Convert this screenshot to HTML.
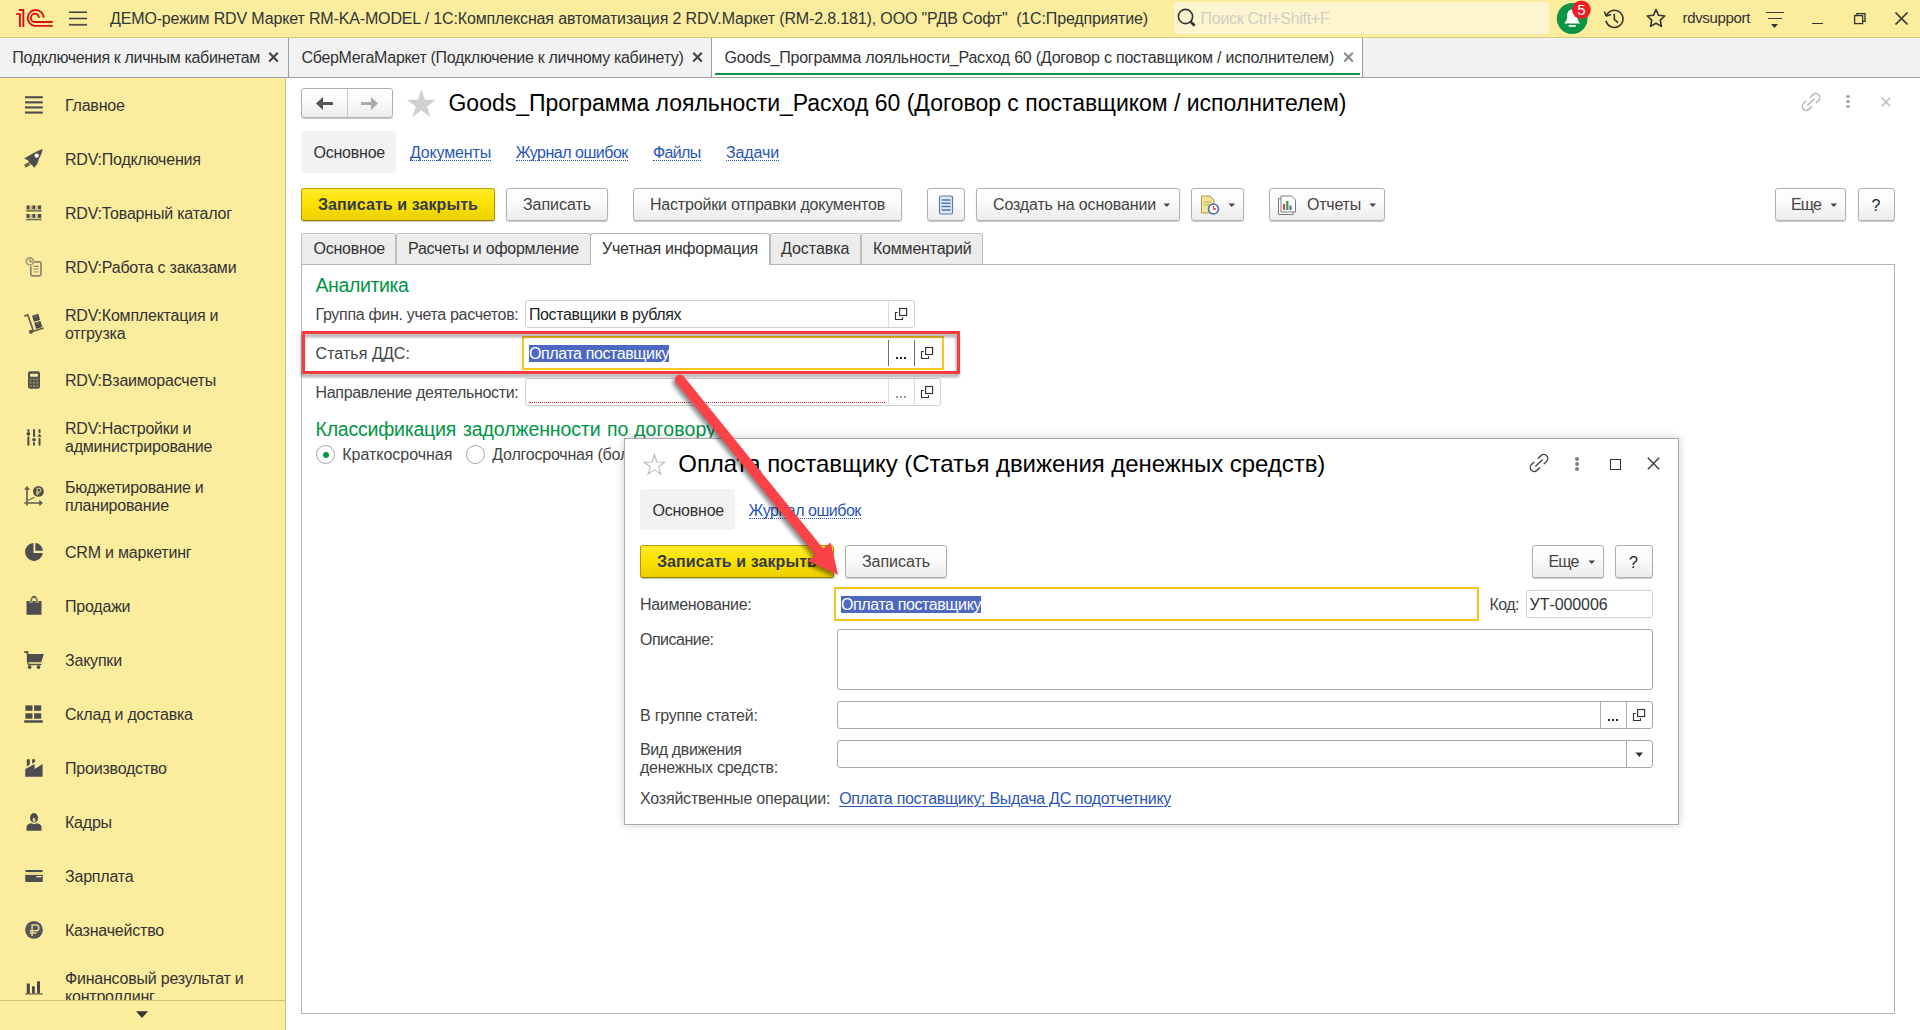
<!DOCTYPE html>
<html lang="ru">
<head>
<meta charset="utf-8">
<title>1C</title>
<style>
*{box-sizing:border-box;margin:0;padding:0}
html,body{width:1920px;height:1030px;overflow:hidden;background:#fff}
body{font-family:"Liberation Sans",Arial,sans-serif;font-size:15.6px;color:#333;position:relative}
.abs{position:absolute}
.t{position:absolute;white-space:pre;line-height:20px}
#topbar{position:absolute;left:0;top:0;width:1920px;height:38px;background:#fbec9e;border-bottom:1px solid #dccb7c}
#tabs{position:absolute;left:0;top:38px;width:1920px;height:40px;background:#f2f2f2;border-bottom:1px solid #a0a0a0}
.tx{position:absolute;top:14px}
.tdv{position:absolute;top:0;width:1px;height:39px;background:#9c9c9c}
#side{position:absolute;left:0;top:78px;width:286px;height:952px;background:#fbec9e;border-right:1px solid #cdbf7c}
.btn{position:absolute;height:33px;border:1px solid #b3b3b3;border-radius:3px;background:linear-gradient(#ffffff,#f0f0f0);box-shadow:0 1px 0 rgba(0,0,0,.18);font-size:15.6px;color:#444;line-height:31px;text-align:center;white-space:pre}
.btn.y{background:linear-gradient(#ffe81c,#f2d600);border-color:#c8a800;color:#333;font-weight:bold}
.lnk{color:#2255bb;text-decoration:underline;text-decoration-style:dotted;text-decoration-thickness:1px;text-underline-offset:3px}
.inp{position:absolute;border:1px solid #c8c8c8;border-radius:3px;background:#fff}
.grn{color:#009646}
.si{position:absolute;left:65px;color:#333;font-size:16px;letter-spacing:-0.21px;line-height:18px;white-space:pre}

.tt{position:absolute;white-space:pre;line-height:1}
#main{position:absolute;left:286px;top:78px;width:1634px;height:952px;background:#fff}
.b{position:absolute;height:33px;border:1px solid #b0b0b0;border-radius:3px;background:linear-gradient(#fff 0%,#fafafa 45%,#ececec 100%);box-shadow:0 1px 1px rgba(0,0,0,.22)}
.b.y{background:linear-gradient(#ffea2e 0%,#fce300 45%,#ecd000 100%);border-color:#b8a000 #b09800 #978300 #b09800}
.fld{position:absolute;border:1px solid #d0d0d0;border-radius:3px;background:#fff}
.fld2{position:absolute;border:1px solid #a8a8a8;border-radius:3px;background:#fff}
.sep{position:absolute;width:1px;background:#c4c4c4}
.tab{position:absolute;top:155px;height:31px;background:#ececec;border:1px solid #bdbdbd;border-bottom:none;border-radius:3px 3px 0 0}
</style>
</head>
<body>
<div id="topbar">
<svg class="abs" style="left:10px;top:2px" width="90" height="34" viewBox="0 0 90 34">
<g fill="none" stroke="#d9121a" stroke-width="1.9">
<path d="M6.1 12.1 L9.9 12.1 L9.9 24.9"/>
<path d="M8.9 7.950 L13.350 7.950 L13.350 24.900"/>
<path d="M33.700 15.600 A8 8 0 1 0 24.850 23.900 L42.700 23.900"/>
<path d="M29 15.700 A4.100 4.100 0 1 0 24.850 20 L42.700 20"/>
</g>
<g stroke="#3a3f45" stroke-width="1.6"><path d="M59 10.300 H77 M59 16.500 H77"/><path d="M59 22.800 H77" stroke="#55534a" stroke-width="1.8"/></g>
</svg>
<div class="tt" style="left:110px;top:10.75px;font-size:16px;letter-spacing:-0.148px;color:#2f3636;">ДЕМО-режим RDV Маркет RM-KA-MODEL / 1С:Комплексная автоматизация 2 RDV.Маркет (RM-2.8.181), ООО "РДВ Софт"  (1С:Предприятие)</div>
<div class="abs" style="left:1174px;top:2px;width:375px;height:32px;background:#fdf5d0;border-radius:3px"></div>
<svg class="abs" style="left:1175px;top:6.400px" width="24" height="24" viewBox="0 0 24 24"><circle cx="10.500" cy="10.500" r="7.100" fill="none" stroke="#333" stroke-width="1.600"/><path d="M15.600 15.600 L19.700 19.700" stroke="#333" stroke-width="2.700"/></svg>
<div class="tt" style="left:1200.6px;top:10.75px;font-size:16px;letter-spacing:-0.297px;color:#d2cdc6;">Поиск Ctrl+Shift+F</div>
<svg class="abs" style="left:1555px;top:0px" width="40" height="36" viewBox="0 0 40 36">
<circle cx="17.2" cy="18.5" r="15.4" fill="#0d9546"/>
<path d="M17.2 9.5 c-3.8 0 -5 3.2 -5 6.5 c0 3.5 -1.2 5.5 -3 7.5 l16 0 c-1.8 -2 -3 -4 -3 -7.5 c0 -3.300 -1.2 -6.5 -5 -6.500z" fill="#fff"/>
<rect x="13.5" y="25" width="7.4" height="1.8" rx=".9" fill="#fff"/>
<circle cx="26.4" cy="9.7" r="9.3" fill="#ee1c25"/>
<text x="26.4" y="15" font-family="Liberation Sans, sans-serif" font-size="15" fill="#fff" text-anchor="middle">5</text>
</svg>
<svg class="abs" style="left:1602px;top:7px" width="24" height="24" viewBox="0 0 24 24" fill="none" stroke="#333" stroke-width="1.6">
<path d="M4.6 8.2 A8.6 8.6 0 1 1 4 13.8"/><path d="M2.3 4.5 L4.3 9 L9 7.6" stroke-linejoin="round"/><path d="M12.3 6.8 L12.3 12.4 L16 15.6"/></svg>
<svg class="abs" style="left:1645px;top:7px" width="22" height="22" viewBox="0 0 22 22"><path d="M11 2.6 L13.6 8.3 L19.8 9 L15.200 13.200 L16.500 19.400 L11 16.300 L5.500 19.400 L6.800 13.200 L2.200 9 L8.400 8.300 Z" fill="none" stroke="#333" stroke-width="1.6" stroke-linejoin="round"/></svg>
<div class="tt" style="left:1682.5px;top:10.25px;font-size:15px;letter-spacing:-0.338px;color:#333;">rdvsupport</div>
<div class="abs" style="left:1766px;top:11.500px;width:18px;height:1.500px;background:#3c3c3c"></div>
<div class="abs" style="left:1768px;top:17.500px;width:14px;height:1.500px;background:#3c3c3c"></div>
<svg class="abs" style="left:1771px;top:24px" width="8" height="5"><path d="M0 0 L7 0 L3.5 4 Z" fill="#333"/></svg>
<div class="abs" style="left:1812px;top:23px;width:11px;height:1px;background:#333"></div>
<svg class="abs" style="left:1852px;top:11px" width="16" height="16" viewBox="0 0 16 16" fill="none" stroke="#333" stroke-width="1.3"><rect x="2.6" y="4.600" width="8" height="8"/><path d="M5 4.600 L5 2.600 L13 2.600 L13 10.400 L10.600 10.400"/></svg>
<svg class="abs" style="left:1893px;top:10px" width="17" height="17" viewBox="0 0 17 17"><path d="M2.5 2.500 L14.500 14.500 M14.500 2.500 L2.500 14.500" stroke="#333" stroke-width="1.7"/></svg>
</div>

<div id="tabs">
<div class="tt" style="left:12.3px;top:11.75px;font-size:16px;letter-spacing:-0.347px;color:#333;">Подключения к личным кабинетам</div><svg class="tx" style="left:268px" width="11" height="11" viewBox="0 0 11 11"><path d="M1.200 0.800 L9.800 9.400 M9.800 0.800 L1.200 9.400" stroke="#444" stroke-width="2.1"/></svg>
<div class="tdv" style="left:288px"></div>
<div class="tt" style="left:301.5px;top:11.75px;font-size:16px;letter-spacing:-0.314px;color:#333;">СберМегаМаркет (Подключение к личному кабинету)</div><svg class="tx" style="left:691.5px" width="11" height="11" viewBox="0 0 11 11"><path d="M1.200 0.800 L9.800 9.400 M9.800 0.800 L1.200 9.400" stroke="#444" stroke-width="2.1"/></svg>
<div class="tdv" style="left:711px"></div>
<div class="abs" style="left:712px;top:0;width:650px;height:39px;background:#fff"></div>
<div class="tt" style="left:724.5px;top:11.75px;font-size:16px;letter-spacing:-0.220px;color:#333;">Goods_Программа лояльности_Расход 60 (Договор с поставщиком / исполнителем)</div><svg class="tx" style="left:1342.5px" width="11" height="11" viewBox="0 0 11 11"><path d="M1.200 0.800 L9.800 9.400 M9.800 0.800 L1.200 9.400" stroke="#8a8a8a" stroke-width="2.1"/></svg>
<div class="abs" style="left:715px;top:35px;width:645px;height:2px;background:#0e9347"></div>
<div class="tdv" style="left:1362px"></div>
</div>

<div id="side">
<div class="abs" style="left:0;top:0;width:285px;height:922px;overflow:hidden">
<svg class="abs" style="left:14px;top:12px" width="60" height="32" viewBox="0 0 60 32"><g fill="#4d4d4d"><rect x="11" y="6.2" width="17.800" height="2.100"/><rect x="11" y="11.300" width="17.800" height="2.100"/><rect x="11" y="16.400" width="17.800" height="2.100"/><rect x="11" y="21.500" width="17.800" height="2.100"/></g></svg>
<div class="si" style="top:19px">Главное</div>
<svg class="abs" style="left:14px;top:66px" width="60" height="32" viewBox="0 0 60 32"><path d="M28.700 5 C24 6.500 20 8.800 17.500 10.300 L10.100 14.500 L13.900 16.300 C14.500 17.800 15.300 19 16.200 20 L18.700 21.700 L20.300 23.700 L23.200 20 C24 18.500 24.400 16.500 24.800 15 C26.800 11.500 28.100 8.500 28.700 5 Z" fill="#4d4d4d"/><circle cx="22.700" cy="11.600" r="2.200" fill="#fff"/><path d="M10.400 20.300 L14.800 18.300 L16 21.500 L11.400 23.800 Z" fill="#6b674f"/></svg>
<div class="si" style="top:73px">RDV:Подключения</div>
<svg class="abs" style="left:14px;top:120px" width="60" height="32" viewBox="0 0 60 32"><rect x="12.5" y="7.5" width="3.200" height="3.900" fill="#4a4a4a"/><rect x="18.2" y="7.5" width="3.200" height="3.900" fill="#4a4a4a"/><rect x="24" y="7.5" width="3.200" height="3.900" fill="#4a4a4a"/><rect x="12.5" y="16" width="3.200" height="3.900" fill="#4a4a4a"/><rect x="18.2" y="16" width="3.200" height="3.900" fill="#4a4a4a"/><rect x="24" y="16" width="3.200" height="3.900" fill="#4a4a4a"/><rect x="12.200" y="12" width="15.400" height="1.700" fill="#7d785c"/><rect x="12.200" y="20.800" width="15.400" height="1.500" fill="#6f6b54"/><g fill="#cfc384"><rect x="15.700" y="7.500" width="2.500" height="4.500"/><rect x="21.400" y="7.500" width="2.600" height="4.500"/><rect x="15.700" y="16" width="2.500" height="4.800"/><rect x="21.400" y="16" width="2.600" height="4.800"/></g></svg>
<div class="si" style="top:127px">RDV:Товарный каталог</div>
<svg class="abs" style="left:14px;top:174px" width="60" height="32" viewBox="0 0 60 32"><g fill="none" stroke="#8d8769" stroke-width="1.700"><path d="M20.500 9.900 H25.400 Q27 9.900 27 11.500 V22.300 Q27 23.900 25.400 23.900 H18.400 Q16.800 23.900 16.800 22.300 V14.200"/><circle cx="15.900" cy="9.400" r="3.600" stroke="#a39c74"/><path d="M16 7 V9.600 H18.300" stroke-width="1.300"/><path d="M19.400 14.300 H24.700" stroke-width="1.200"/><path d="M19.400 17 H24.700 M19.400 19.900 H24.700" stroke="#b3aa7c" stroke-width="1.400"/></g></svg>
<div class="si" style="top:181px">RDV:Работа с заказами</div>
<svg class="abs" style="left:14px;top:230px" width="60" height="32" viewBox="0 0 60 32"><g fill="none" stroke="#5f5c4c" stroke-width="1.700"><path d="M10.300 8.300 L13.800 6.800 L19.500 23.200 L29.600 20"/></g><circle cx="17" cy="23.800" r="2.100" fill="#5a574a"/><g transform="rotate(-17 22 9.800)"><rect x="18.800" y="6.700" width="6.500" height="6.300" fill="#4a4a46"/><path d="M20.500 8.200 H23.500" stroke="#8a8468" stroke-width="1"/></g><g transform="rotate(-17 24.200 16.900)"><rect x="21" y="13.800" width="6.500" height="6.300" fill="#4a4a46"/><path d="M22.700 15.300 H25.700" stroke="#8a8468" stroke-width="1"/></g></svg>
<div class="si" style="top:229px">RDV:Комплектация и
отгрузка</div>
<svg class="abs" style="left:14px;top:286px" width="60" height="32" viewBox="0 0 60 32"><rect x="14" y="7.300" width="12" height="17.400" rx="2" fill="#56544a"/><rect x="16" y="9.800" width="8" height="3" rx="1.200" fill="#fbec9e"/><rect x="15.8" y="14.7" width="1.600" height="1.700" fill="#9d966f"/><rect x="19.2" y="14.7" width="1.600" height="1.700" fill="#9d966f"/><rect x="22.5" y="14.7" width="1.600" height="1.700" fill="#9d966f"/><rect x="15.8" y="17.95" width="1.600" height="1.700" fill="#9d966f"/><rect x="19.2" y="17.95" width="1.600" height="1.700" fill="#9d966f"/><rect x="22.5" y="17.95" width="1.600" height="1.700" fill="#9d966f"/><rect x="15.8" y="21.099999999999998" width="1.600" height="1.700" fill="#9d966f"/><rect x="19.2" y="21.099999999999998" width="1.600" height="1.700" fill="#9d966f"/><rect x="22.5" y="21.099999999999998" width="1.600" height="1.700" fill="#9d966f"/></svg>
<div class="si" style="top:294px">RDV:Взаиморасчеты</div>
<svg class="abs" style="left:14px;top:343px" width="60" height="32" viewBox="0 0 60 32"><g stroke="#4c4c48" stroke-width="2" stroke-linecap="round"><path d="M14.400 9 V10 M14.400 16.300 V23.800"/><path d="M20 9 V15 M20 22 V23.800"/><path d="M25.500 9 V11.300 M25.500 17.800 V23.800"/></g><circle cx="14.400" cy="12.800" r="1.900" fill="#4c4c48"/><circle cx="20" cy="18.700" r="1.800" fill="#4c4c48"/><path d="M23.300 15.800 L25.500 12.800 L27.700 15.800 Z" fill="#4c4c48"/></svg>
<div class="si" style="top:342px">RDV:Настройки и
администрирование</div>
<svg class="abs" style="left:14px;top:402px" width="60" height="32" viewBox="0 0 60 32"><g fill="#5b594b"><path d="M12.200 9.500 H13.800 V25.600 H12.200 Z"/><path d="M10 9.700 L13 6 L16 9.700 Z"/><path d="M10.300 22.200 H26 V23.800 H10.300 Z" fill="#6a6753"/><path d="M25.300 19.800 L28.900 23 L25.300 26.200 Z"/></g><path d="M13.600 20.400 L16 19.600 L17.500 18.600 L20.600 17.400" stroke="#6a6753" stroke-width="1.100" fill="none"/><circle cx="24.400" cy="11.400" r="5.400" fill="#4f4e49"/><path d="M23.200 15.300 V8.300 H25 A1.900 1.900 0 0 1 25 12.100 H22 M22 13.700 H25.300" stroke="#d7cb86" stroke-width="1.100" fill="none"/></svg>
<div class="si" style="top:401px">Бюджетирование и
планирование</div>
<svg class="abs" style="left:14px;top:458px" width="60" height="32" viewBox="0 0 60 32"><path d="M19.500 7.100 A8.900 8.900 0 1 0 28.800 16.900 L19.500 16.900 Z" fill="#4d4d4d"/><path d="M21.300 7.100 A7.700 7.700 0 0 1 28.800 14.700 L21.300 14.700 Z" fill="#4d4d4d"/></svg>
<div class="si" style="top:466px">CRM и маркетинг</div>
<svg class="abs" style="left:14px;top:512px" width="60" height="32" viewBox="0 0 60 32"><path d="M17 14.400 V10.400 A3.050 3.050 0 0 1 23.100 10.400 V14.400" fill="none" stroke="#8a8468" stroke-width="1.800" stroke-linecap="round"/><path d="M12.500 11.100 H15.600 V13 H18.400 V11.100 H21.700 V13 H24.500 V11.100 H27.500 V24.700 H12.500 Z" fill="#4d4d4d"/><path d="M18.300 6.900 A3.050 3.050 0 0 1 21.800 6.900" stroke="#4f4f4f" stroke-width="1.200" fill="none"/></svg>
<div class="si" style="top:520px">Продажи</div>
<svg class="abs" style="left:14px;top:566px" width="60" height="32" viewBox="0 0 60 32"><path d="M10.200 8.200 L13.500 7.900 L13.500 10.600" fill="none" stroke="#55534a" stroke-width="1.700"/><path d="M12.800 10 H29.900 L27.200 18.200 H12.800 Z" fill="#4d4d4d"/><path d="M13.800 18 L14.500 20.500 H27.500" fill="none" stroke="#55534a" stroke-width="1.300"/><circle cx="15.600" cy="23.100" r="1.900" fill="#4d4d4d"/><circle cx="24.500" cy="23.100" r="1.900" fill="#4d4d4d"/></svg>
<div class="si" style="top:574px">Закупки</div>
<svg class="abs" style="left:14px;top:620px" width="60" height="32" viewBox="0 0 60 32"><g fill="#4d4d4d"><rect x="11.400" y="7.400" width="7.100" height="5.400"/><rect x="20.100" y="7.400" width="7.100" height="5.400"/><rect x="11.400" y="15.300" width="7.100" height="5.400"/><rect x="20.100" y="15.300" width="7.100" height="5.400"/><rect x="10.200" y="22.300" width="18.600" height="2.400" fill="#484848"/></g></svg>
<div class="si" style="top:628px">Склад и доставка</div>
<svg class="abs" style="left:14px;top:674px" width="60" height="32" viewBox="0 0 60 32"><g fill="#4d4d4d"><path d="M11.250 24.700 V17 L20.600 12 V17 L28.600 12 V24.700 Z"/><path d="M12.800 7.300 H15.800 V12.500 L12.800 14.400 Z"/><path d="M18.100 7.300 H21.100 V10 L18.100 11.700 Z"/></g></svg>
<div class="si" style="top:682px">Производство</div>
<svg class="abs" style="left:14px;top:728px" width="60" height="32" viewBox="0 0 60 32"><ellipse cx="20" cy="11.900" rx="4" ry="4.900" fill="#4d4d4d"/><ellipse cx="20" cy="13.900" rx="1.500" ry="2.200" fill="#d8cc88"/><path d="M12.500 24.700 V21 Q12.500 18.200 17 17.300 L20 18.300 L23 17.300 Q27.500 18.200 27.500 21 V24.700 Z" fill="#4d4d4d"/></svg>
<div class="si" style="top:736px">Кадры</div>
<svg class="abs" style="left:14px;top:782px" width="60" height="32" viewBox="0 0 60 32"><rect x="11.250" y="9.900" width="17.500" height="2.200" rx="1" fill="#484848"/><path d="M11.250 15 H28.750 V20.900 Q28.750 21.900 27.750 21.900 H12.250 Q11.250 21.900 11.250 20.900 Z" fill="#4d4d4d"/><rect x="22.300" y="16.100" width="5.400" height="1.200" rx=".5" fill="#fbec9e"/><rect x="11.250" y="12.100" width="17.500" height="2.900" fill="#e6d98f"/></svg>
<div class="si" style="top:790px">Зарплата</div>
<svg class="abs" style="left:14px;top:836px" width="60" height="32" viewBox="0 0 60 32"><circle cx="20" cy="15.900" r="8.900" fill="#555557"/><path d="M18.100 21.900 V11 H22 A2.900 2.900 0 0 1 22 16.800 H15.600 M15.600 19.100 H22.500" stroke="#e3d78e" stroke-width="1.500" fill="none"/></svg>
<div class="si" style="top:844px">Казначейство</div>
<svg class="abs" style="left:14px;top:888px" width="60" height="32" viewBox="0 0 60 32"><g fill="#48484a"><rect x="12.800" y="17.500" width="3" height="10"/><rect x="18" y="20.300" width="2.800" height="7.200"/><rect x="23" y="15.300" width="3" height="12.200"/><rect x="11.250" y="27.300" width="17.500" height="1.200" fill="#5a584c"/></g></svg>
<div class="si" style="top:892px">Финансовый результат и
контроллинг</div>
</div>
<div class="abs" style="left:0;top:922px;width:285px;height:1px;background:#cdbf7c"></div>
<svg class="abs" style="left:135px;top:932px" width="14" height="9" viewBox="0 0 14 9"><path d="M1 1.200 H13 L7 8 Z" fill="#333"/></svg>
</div>
<div id="main">
<div class="b" style="left:15px;top:10px;width:92px;height:30px"></div>
<div class="sep" style="left:61px;top:11px;height:28px;background:#c8c8c8"></div>
<svg class="abs" style="left:15px;top:10px" width="140" height="32" viewBox="0 0 140 32"><path d="M14.900 15.500 L22 9.100 V14 H31.900 V17 H22 V21.900 Z" fill="#555"/><path d="M77 15.500 L70 9.100 V14 H60 V17 H70 V21.900 Z" fill="#ababab"/><path d="M120.40 1.30 L123.93 11.75 L134.95 11.87 L126.11 18.45 L129.39 28.98 L120.40 22.60 L111.41 28.98 L114.69 18.45 L105.85 11.87 L116.87 11.75 Z" fill="#d0d0d0"/></svg>
<div class="tt" style="left:162.5px;top:13.75px;font-size:23px;letter-spacing:-0.025px;color:#000;">Goods_Программа лояльности_Расход 60 (Договор с поставщиком / исполнителем)</div>
<svg class="abs" style="left:1513.40px;top:12.00px" width="24" height="24" viewBox="-12 -12 24 24" fill="none" stroke="#b4b4b4" stroke-width="1.24" stroke-linecap="round"><g transform="rotate(-43.200) scale(1.130)"><path d="M2.400 -3.500 L5.800 -3.500 A3.500 3.500 0 0 1 5.800 3.500 L2.900 3.500"/><path d="M-2.400 3.500 L-5.800 3.500 A3.500 3.500 0 0 1 -5.800 -3.500 L-2.900 -3.500"/><path d="M-3.900 0 L3.900 0"/></g></svg>
<div class="abs" style="left:1560.1px;top:16.6px;width:3.800px;height:3.800px;border-radius:50%;background:#adadad"></div>
<div class="abs" style="left:1560.1px;top:21.6px;width:3.800px;height:3.800px;border-radius:50%;background:#adadad"></div>
<div class="abs" style="left:1560.1px;top:26.5px;width:3.800px;height:3.800px;border-radius:50%;background:#adadad"></div>
<svg class="abs" style="left:1595.4px;top:19px" width="10" height="10" viewBox="0 0 10 10"><path d="M0.800 0.800 L9.200 9.200 M9.200 0.800 L0.800 9.200" stroke="#b5b5b5" stroke-width="1.300"/></svg>
<div class="abs" style="left:15px;top:53px;width:95px;height:42px;background:#f2f2f2;border-radius:4px"></div>
<div class="tt" style="left:27.5px;top:66.75px;font-size:16px;letter-spacing:-0.227px;color:#333;">Основное</div>
<div class="tt" style="left:124px;top:66.75px;font-size:16px;letter-spacing:-0.165px;color:#2a56b5;">Документы</div>
<div class="abs" style="left:124px;top:82px;width:81px;height:0;border-top:1px dotted #2a56b5"></div>
<div class="tt" style="left:229.7px;top:66.75px;font-size:16px;letter-spacing:-0.497px;color:#2a56b5;">Журнал ошибок</div>
<div class="abs" style="left:229.7px;top:82px;width:112.09999999999991px;height:0;border-top:1px dotted #2a56b5"></div>
<div class="tt" style="left:367px;top:66.75px;font-size:16px;letter-spacing:-0.649px;color:#2a56b5;">Файлы</div>
<div class="abs" style="left:367px;top:82px;width:47.60000000000002px;height:0;border-top:1px dotted #2a56b5"></div>
<div class="tt" style="left:440px;top:66.75px;font-size:16px;letter-spacing:-0.120px;color:#2a56b5;">Задачи</div>
<div class="abs" style="left:440px;top:82px;width:53px;height:0;border-top:1px dotted #2a56b5"></div>
<div class="b y" style="left:15px;top:110px;width:194px"></div>
<div class="tt" style="left:32px;top:118.75px;font-size:16px;letter-spacing:0.079px;color:#353a4c;font-weight:bold;">Записать и закрыть</div>
<div class="b " style="left:220px;top:110px;width:102px"></div>
<div class="tt" style="left:237px;top:118.75px;font-size:16px;letter-spacing:-0.047px;color:#444;">Записать</div>
<div class="b " style="left:347px;top:110px;width:269px"></div>
<div class="tt" style="left:364px;top:118.75px;font-size:16px;letter-spacing:-0.195px;color:#444;">Настройки отправки документов</div>
<div class="b " style="left:641px;top:110px;width:38px"></div>
<svg class="abs" style="left:652px;top:117px" width="16" height="20" viewBox="0 0 16 20"><rect x="1.500" y="1" width="13" height="18" rx="1.500" fill="#dfe8f2" stroke="#5b7da6" stroke-width="1.200"/><path d="M3.500 5 H12.500 M3.500 8.300 H12.500 M3.500 11.600 H12.500 M3.500 14.900 H12.500" stroke="#4e78ab" stroke-width="1.500"/></svg>
<div class="b " style="left:690px;top:110px;width:204px"></div>
<div class="tt" style="left:707px;top:118.75px;font-size:16px;letter-spacing:-0.150px;color:#444;">Создать на основании</div>
<svg class="abs" style="left:877px;top:125px" width="8" height="5"><path d="M0.500 0.500 H7 L3.750 4 Z" fill="#444"/></svg>
<div class="b " style="left:905px;top:110px;width:53px"></div>
<svg class="abs" style="left:913px;top:116px" width="22" height="22" viewBox="0 0 22 22"><path d="M2.500 2 H11 L15 6 V19 H2.500 Z" fill="#f4e3a0" stroke="#b39a3e" stroke-width="1"/><path d="M5 8 H12 M5 11 H10" stroke="#c2a94b" stroke-width="1.200"/><circle cx="14.500" cy="15" r="5" fill="#fff" stroke="#4a6fb0" stroke-width="1.600"/><path d="M14.500 12 V15 H17" stroke="#d04040" stroke-width="1.300" fill="none"/></svg>
<svg class="abs" style="left:942px;top:125px" width="8" height="5"><path d="M0.500 0.500 H7 L3.750 4 Z" fill="#444"/></svg>
<div class="b " style="left:983px;top:110px;width:116px"></div>
<svg class="abs" style="left:991px;top:116px" width="22" height="22" viewBox="0 0 22 22"><path d="M1.500 4.500 H4 V2 H14.500 L18.500 6 V18 H16 V20.500 H1.500 Z" fill="#fff" stroke="#7a7a7a" stroke-width="1"/><path d="M4 4.500 V18 H16" fill="none" stroke="#7a7a7a" stroke-width="1"/><rect x="6" y="10" width="2.200" height="6" fill="#d34a3f"/><rect x="9.200" y="7" width="2.200" height="9" fill="#3a9a4a"/><rect x="12.400" y="11.500" width="2.200" height="4.500" fill="#4a6fb0"/></svg>
<div class="tt" style="left:1021px;top:118.75px;font-size:16px;letter-spacing:-0.219px;color:#444;">Отчеты</div>
<svg class="abs" style="left:1083px;top:125px" width="8" height="5"><path d="M0.500 0.500 H7 L3.750 4 Z" fill="#444"/></svg>
<div class="b " style="left:1489px;top:110px;width:71px"></div>
<div class="tt" style="left:1505px;top:118.75px;font-size:16px;letter-spacing:-0.854px;color:#444;">Еще</div>
<svg class="abs" style="left:1544px;top:125px" width="8" height="5"><path d="M0.500 0.500 H7 L3.750 4 Z" fill="#444"/></svg>
<div class="b " style="left:1572px;top:110px;width:37px"></div>
<div class="tt" style="left:1585.5px;top:119.75px;font-size:16px;letter-spacing:0px;color:#222;">?</div>
<div class="abs" style="left:15px;top:186px;width:1594px;height:750px;border:1px solid #b5b5b5;background:#fff"></div>
<div class="tab" style="left:15px;width:95px;box-shadow:inset 0 1px 0 #f6f6f6"></div>
<div class="tab" style="left:110px;width:195px;box-shadow:inset 0 1px 0 #f6f6f6"></div>
<div class="tab" style="left:304px;width:180px;height:32px;background:#fff;border-color:#b5b5b5"></div>
<div class="tab" style="left:484px;width:91px;box-shadow:inset 0 1px 0 #f6f6f6"></div>
<div class="tab" style="left:575px;width:122px;box-shadow:inset 0 1px 0 #f6f6f6"></div>
<div class="tt" style="left:27.5px;top:162.75px;font-size:16px;letter-spacing:-0.227px;color:#333;">Основное</div>
<div class="tt" style="left:122px;top:162.75px;font-size:16px;letter-spacing:-0.249px;color:#333;">Расчеты и оформление</div>
<div class="tt" style="left:316px;top:162.75px;font-size:16px;letter-spacing:-0.247px;color:#333;">Учетная информация</div>
<div class="tt" style="left:495px;top:162.75px;font-size:16px;letter-spacing:-0.027px;color:#333;">Доставка</div>
<div class="tt" style="left:587px;top:162.75px;font-size:16px;letter-spacing:-0.207px;color:#333;">Комментарий</div>
<div class="tt" style="left:29.5px;top:197.50px;font-size:19.5px;letter-spacing:-0.392px;color:#009646;">Аналитика</div>
<div class="tt" style="left:29.5px;top:228.75px;font-size:16px;letter-spacing:-0.315px;color:#444;">Группа фин. учета расчетов:</div>
<div class="fld" style="left:239px;top:222px;width:390px;height:28px"></div>
<div class="sep" style="left:602px;top:223px;height:26px;background:#dcdcdc"></div>
<div class="tt" style="left:243px;top:228.75px;font-size:16px;letter-spacing:-0.406px;color:#222;">Поставщики в рублях</div>
<svg class="abs" style="left:608px;top:229px" width="14" height="14" viewBox="0 0 14 14" fill="none" stroke="#333" stroke-width="1.150"><rect x="5.600" y="1.500" width="7" height="7"/><path d="M3.700 5.500 H1.500 V12.500 H8.500 V10.300"/></svg>
<div class="tt" style="left:29.5px;top:267.75px;font-size:16px;letter-spacing:0.072px;color:#444;">Статья ДДС:</div>
<div class="abs" style="left:236px;top:258px;width:422px;height:34px;border:2px solid #f7c619;background:#fff"></div>
<div class="abs" style="left:243px;top:266.5px;width:140px;height:17px;background:#4c68c1"></div>
<div class="tt" style="left:243px;top:267.75px;font-size:16px;letter-spacing:-0.404px;color:#fff;">Оплата поставщику</div>
<div class="sep" style="left:602px;top:262px;height:26px;background:#6e6e6e"></div>
<div class="sep" style="left:628px;top:262px;height:26px;background:#6e6e6e"></div>
<div class="abs" style="left:610px;top:279px;width:2px;height:2px;background:#222;box-shadow:4px 0 0 #222,8px 0 0 #222"></div>
<svg class="abs" style="left:634px;top:268px" width="14" height="14" viewBox="0 0 14 14" fill="none" stroke="#333" stroke-width="1.150"><rect x="5.600" y="1.500" width="7" height="7"/><path d="M3.700 5.500 H1.500 V12.500 H8.500 V10.300"/></svg>
<div class="tt" style="left:29.5px;top:306.75px;font-size:16px;letter-spacing:-0.318px;color:#444;">Направление деятельности:</div>
<div class="fld" style="left:239px;top:300px;width:416px;height:28px"></div>
<div class="abs" style="left:243px;top:324px;width:356px;height:0;border-top:1px dotted #e0202a"></div>
<div class="sep" style="left:602px;top:301px;height:26px;background:#dcdcdc"></div>
<div class="sep" style="left:628px;top:301px;height:26px;background:#dcdcdc"></div>
<div class="abs" style="left:610px;top:318px;width:2px;height:2px;background:#9a9a9a;box-shadow:4px 0 0 #9a9a9a,8px 0 0 #9a9a9a"></div>
<svg class="abs" style="left:634px;top:307px" width="14" height="14" viewBox="0 0 14 14" fill="none" stroke="#333" stroke-width="1.150"><rect x="5.600" y="1.500" width="7" height="7"/><path d="M3.700 5.500 H1.500 V12.500 H8.500 V10.300"/></svg>
<div class="abs" style="left:16px;top:253px;width:658px;height:43px;border:3px solid #fb3c3f;filter:drop-shadow(-0.500px 3.500px 1.600px rgba(0,0,0,.37))"></div>
<div class="tt" style="left:29.5px;top:341.50px;font-size:19.5px;letter-spacing:-0.219px;color:#009646;">Классификация</div>
<div class="tt" style="left:177px;top:341.50px;font-size:19.5px;letter-spacing:-0.101px;color:#009646;">задолженности</div>
<div class="tt" style="left:321px;top:341.50px;font-size:19.5px;letter-spacing:0.047px;color:#009646;">по</div>
<div class="tt" style="left:348px;top:341.50px;font-size:19.5px;letter-spacing:0.109px;color:#009646;">договору</div>
<div class="abs" style="left:30.0px;top:367px;width:19px;height:19px;border:1px solid #a6a6a6;border-radius:50%;background:#fff"></div>
<div class="abs" style="left:179.8px;top:367px;width:19px;height:19px;border:1px solid #a6a6a6;border-radius:50%;background:#fff"></div>
<div class="abs" style="left:36.5px;top:373.5px;width:6px;height:6px;border-radius:50%;background:#0b9547"></div>
<div class="tt" style="left:56.3px;top:368.75px;font-size:16px;letter-spacing:-0.028px;color:#444;">Краткосрочная</div>
<div class="tt" style="left:206.3px;top:368.75px;font-size:16px;letter-spacing:-0.21px;color:#444;">Долгосрочная (более 12 месяцев)</div>
</div>
<div id="dlg" style="position:absolute;left:624px;top:438px;width:1055px;height:387px;background:#fff;border:1px solid #a9a9a9;box-shadow:0 0 9px rgba(0,0,0,.2)">
<svg class="abs" style="left:17px;top:14px" width="25" height="23" viewBox="0 0 25 23"><path d="M12.40 1.70 L14.93 9.02 L22.67 9.16 L16.49 13.83 L18.75 21.24 L12.40 16.80 L6.05 21.24 L8.31 13.83 L2.13 9.16 L9.87 9.02 Z" fill="none" stroke="#b4bbbf" stroke-width="1.100"/></svg>
<div class="tt" style="left:53.3px;top:12.75px;font-size:24px;letter-spacing:-0.052px;color:#000;">Оплата поставщику (Статья движения денежных средств)</div>
<svg class="abs" style="left:901.50px;top:12.30px" width="24" height="24" viewBox="-12 -12 24 24" fill="none" stroke="#484848" stroke-width="1.24" stroke-linecap="round"><g transform="rotate(-43.200) scale(1.130)"><path d="M2.400 -3.500 L5.800 -3.500 A3.500 3.500 0 0 1 5.800 3.500 L2.900 3.500"/><path d="M-2.400 3.500 L-5.800 3.500 A3.500 3.500 0 0 1 -5.800 -3.500 L-2.900 -3.500"/><path d="M-3.900 0 L3.900 0"/></g></svg>
<div class="abs" style="left:949.85px;top:17.85px;width:4.100px;height:4.100px;border-radius:50%;background:#7f7f7f"></div>
<div class="abs" style="left:949.85px;top:23.05px;width:4.100px;height:4.100px;border-radius:50%;background:#7f7f7f"></div>
<div class="abs" style="left:949.85px;top:28.15px;width:4.100px;height:4.100px;border-radius:50%;background:#7f7f7f"></div>
<div class="abs" style="left:985px;top:20px;width:11px;height:11px;border:1.300px solid #333"></div>
<svg class="abs" style="left:1021.5px;top:18.2px" width="13" height="13" viewBox="0 0 13 13"><path d="M0.800 0.800 L12.200 12.200 M12.200 0.800 L0.800 12.200" stroke="#333" stroke-width="1.300"/></svg>
<div class="abs" style="left:15px;top:50px;width:95px;height:41px;background:#f2f2f2;border-radius:4px"></div>
<div class="tt" style="left:27.5px;top:63.75px;font-size:16px;letter-spacing:-0.227px;color:#333;">Основное</div>
<div class="tt" style="left:123.6px;top:63.75px;font-size:16px;letter-spacing:-0.489px;color:#2a56b5;">Журнал ошибок</div>
<div class="abs" style="left:123.6px;top:79.3px;width:112px;height:0;border-top:1px dotted #2a56b5"></div>
<div class="b y" style="left:15px;top:106px;width:194px"></div>
<div class="tt" style="left:32px;top:114.75px;font-size:16px;letter-spacing:0.079px;color:#353a4c;font-weight:bold;">Записать и закрыть</div>
<div class="b " style="left:220px;top:106px;width:102px"></div>
<div class="tt" style="left:237px;top:114.75px;font-size:16px;letter-spacing:-0.047px;color:#444;">Записать</div>
<div class="b " style="left:907px;top:106px;width:72px"></div>
<div class="tt" style="left:923.5px;top:114.75px;font-size:16px;letter-spacing:-0.854px;color:#444;">Еще</div>
<svg class="abs" style="left:962.5px;top:121px" width="8" height="5"><path d="M0.500 0.500 H7 L3.750 4 Z" fill="#444"/></svg>
<div class="b " style="left:990px;top:106px;width:38px"></div>
<div class="tt" style="left:1004px;top:115.75px;font-size:16px;letter-spacing:0px;color:#222;">?</div>
<div class="tt" style="left:15px;top:157.75px;font-size:16px;letter-spacing:-0.297px;color:#444;">Наименование:</div>
<div class="abs" style="left:209px;top:148px;width:645px;height:34px;border:2px solid #f5c51f;background:#fff"></div>
<div class="abs" style="left:216px;top:156.5px;width:140px;height:17px;background:#4c68c1"></div>
<div class="tt" style="left:216px;top:157.75px;font-size:16px;letter-spacing:-0.404px;color:#fff;">Оплата поставщику</div>
<div class="tt" style="left:864.4px;top:157.75px;font-size:16px;letter-spacing:-0.514px;color:#444;">Код:</div>
<div class="fld" style="left:901px;top:151px;width:127px;height:28px"></div>
<div class="tt" style="left:904.6px;top:157.75px;font-size:16px;letter-spacing:-0.073px;color:#333;">УТ-000006</div>
<div class="tt" style="left:15px;top:192.75px;font-size:16px;letter-spacing:-0.507px;color:#444;">Описание:</div>
<div class="fld2" style="left:212px;top:190px;width:816px;height:61px"></div>
<div class="tt" style="left:15px;top:268.75px;font-size:16px;letter-spacing:-0.242px;color:#444;">В группе статей:</div>
<div class="fld2" style="left:212px;top:262px;width:816px;height:28px"></div>
<div class="sep" style="left:975px;top:263px;height:26px;background:#a8a8a8"></div>
<div class="sep" style="left:1001px;top:263px;height:26px;background:#a8a8a8"></div>
<div class="abs" style="left:983px;top:280px;width:2px;height:2px;background:#222;box-shadow:4px 0 0 #222,8px 0 0 #222"></div>
<svg class="abs" style="left:1007px;top:269px" width="14" height="14" viewBox="0 0 14 14" fill="none" stroke="#333" stroke-width="1.150"><rect x="5.600" y="1.500" width="7" height="7"/><path d="M3.700 5.500 H1.500 V12.500 H8.500 V10.300"/></svg>
<div class="tt" style="left:15px;top:302.75px;font-size:16px;letter-spacing:-0.384px;color:#444;">Вид движения</div>
<div class="tt" style="left:15px;top:320.75px;font-size:16px;letter-spacing:-0.255px;color:#444;">денежных средств:</div>
<div class="fld2" style="left:212px;top:301px;width:816px;height:28px"></div>
<div class="sep" style="left:1001px;top:302px;height:26px;background:#a8a8a8"></div>
<svg class="abs" style="left:1010px;top:312.5px" width="9" height="6"><path d="M0.500 0.500 H8 L4.250 5 Z" fill="#333"/></svg>
<div class="tt" style="left:15px;top:351.75px;font-size:16px;letter-spacing:-0.207px;color:#444;">Хозяйственные операции:</div>
<div class="tt" style="left:214.2px;top:351.75px;font-size:16px;letter-spacing:-0.291px;color:#2a56b5;text-decoration:underline;text-decoration-thickness:1px;text-underline-offset:2px;">Оплата поставщику; Выдача ДС подотчетнику</div>
</div>
<svg class="abs" style="left:0;top:0;pointer-events:none" width="1920" height="1030" viewBox="0 0 1920 1030">
<defs><filter id="ash" x="-20%" y="-20%" width="140%" height="140%"><feGaussianBlur stdDeviation="2"/></filter></defs>
<g transform="translate(-2.500,3)" stroke="#000" fill="#000" opacity=".45" filter="url(#ash)"><path d="M680.0 379.6 L819.9 552.5" stroke-width="10" stroke-linecap="round" fill="none"/><path d="M838.0 574.8 L808.0 560.9 L830.7 542.5 Z" stroke="none"/></g>
<g stroke="#fa4247" fill="#fa4247"><path d="M680.0 379.6 L819.9 552.5" stroke-width="10" stroke-linecap="round" fill="none"/><path d="M838.0 574.8 L808.0 560.9 L830.7 542.5 Z" stroke="none"/></g>
</svg>
</body>
</html>
